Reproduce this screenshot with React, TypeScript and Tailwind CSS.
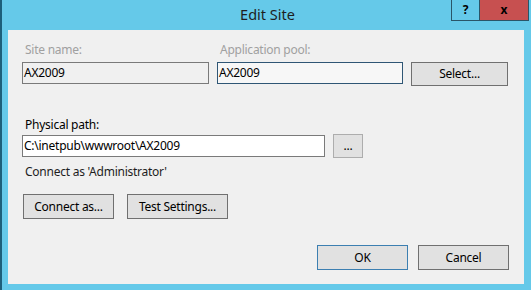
import React from "react";

const font = { fontFamily: '"Noto Sans", "Open Sans", sans-serif' };

function Btn({ w, children, def }: { w: string; children: React.ReactNode; def?: boolean }) {
  return (
    <div
      className={`${w} h-[25px] flex items-center justify-center bg-[#e1e1e1] border text-[12px] text-[#000] ${
        def ? "border-[#3c7fb1]" : "border-[#707070]"
      }`}
    >
      {children}
    </div>
  );
}

export default function App() {
  return (
    <div
      className="relative w-[531px] h-[290px] bg-[#65c9e9] border-l-2 border-[#1d5f7a] overflow-hidden"
      style={font}
    >
      {/* title bar */}
      <div className="h-[30px] flex justify-center pt-[4px] pl-[2px] text-[14.5px] leading-[20px] text-[#1e1e1e]">
        Edit Site
      </div>
      <div className="absolute top-0 left-[449px] flex">
        <div className="w-[29px] h-[21px] border border-t-0 border-[#2a5568] flex items-center justify-center text-[12px] font-bold text-black">
          ?
        </div>
        <div className="w-[49px] h-[21px] bg-[#c75050] border-b border-r border-[#2a5568] flex items-center justify-center text-[12px] font-bold text-black leading-none">
          x
        </div>
      </div>

      {/* panel */}
      <div className="ml-[6px] w-[516px] h-[254px] bg-[#f0f0f0] pl-[14px] pt-[12px] text-[12px] leading-[16px] tracking-[-0.25px]">
        <div className="flex gap-[8px]">
          <div className="w-[187px]">
            <div className="h-[16px] pl-[3px] text-[#a0a0a0]">Site name:</div>
            <div className="mt-[4px] h-[22px] border border-[#7a7a7a] bg-[#f0f0f0] pl-[1px] flex items-center text-black">
              AX2009
            </div>
          </div>
          <div className="w-[186px]">
            <div className="h-[16px] pl-[3px] text-[#a0a0a0]">Application pool:</div>
            <div className="mt-[4px] h-[22px] border border-[#2f5675] bg-[#f7f7f7] pl-[1px] flex items-center text-black">
              AX2009
            </div>
          </div>
          <div className="mt-[20px] w-[97px] h-[24px] flex items-center justify-center bg-[#e1e1e1] border border-[#707070] text-black">
            Select...
          </div>
        </div>

        <div className="mt-[31px] h-[16px] pl-[3px] text-black">Physical path:</div>
        <div className="mt-[1px] flex items-center gap-[8px]">
          <div className="w-[303px] h-[22px] border border-[#7a7a7a] bg-white pl-[1px] flex items-center text-black">
            C:\inetpub\wwwroot\AX2009
          </div>
          <div className="w-[30px] h-[24px] flex items-center justify-center bg-[#e1e1e1] border border-[#adadad] text-black">
            ...
          </div>
        </div>

        <div className="mt-[6px] h-[16px] pl-[3px] text-[#1e1e1e]">Connect as 'Administrator'</div>

        <div className="mt-[14px] ml-[1px] flex gap-[13px]">
          <Btn w="w-[91px]">Connect as...</Btn>
          <Btn w="w-[101px]">Test Settings...</Btn>
        </div>

        <div className="mt-[26px] pr-[15px] flex justify-end gap-[10px]">
          <Btn w="w-[91px]" def>
            OK
          </Btn>
          <Btn w="w-[91px]">Cancel</Btn>
        </div>
      </div>
    </div>
  );
}
